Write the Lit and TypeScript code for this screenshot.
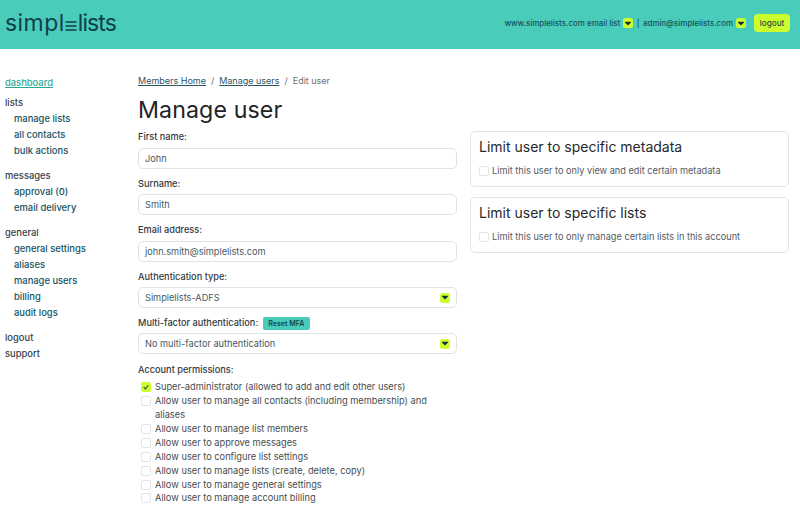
import { LitElement, html, css, svg } from "lit";
import { customElement } from "lit/decorators.js";

const caret = svg`<svg class="caret" viewBox="0 0 10 10" width="10" height="9"><path d="M1.8 3h6.4v1.2L5 7.2 1.8 4.2z" fill="#17313b"/></svg>`;

@customElement("app-root")
export class AppRoot extends LitElement {
  static styles = css`
    :host { display: block; width: 800px; height: 511px; overflow: hidden; background: #fff; font-family: Inter, "Open Sans", sans-serif; color: #3a4145; font-size: 9.5px; }
    * { box-sizing: border-box; }
    a { color: inherit; text-decoration: none; }
    header { height: 49px; background: #4accbb; display: flex; align-items: center; justify-content: space-between; padding: 0 10px 3px 5px; }
    .logo { display: flex; align-items: center; font-family: Inter, sans-serif; font-size: 23px; color: #0e3f4c; font-weight: 400; height: 36px; }
    .logo .a { letter-spacing: 0.45px; }
    .logo .b { letter-spacing: -0.9px; }
    .logo svg { margin: 0 0.5px 0 0.5px; }
    .top { display: flex; align-items: center; font-size: 7.95px; font-weight: 500; color: #145260; }
    .caretbox { width: 10px; height: 10px; background: #ccff2e; border-radius: 2.5px; display: inline-flex; align-items: center; justify-content: center; margin-left: 3px; }
    .caretbox svg { display: block; }
    .sep { margin: 0 3.5px; color: #145260; }
    .logout { background: #ccff2e; border-radius: 4px; height: 18px; width: 36px; margin-left: 8px; display: flex; align-items: center; justify-content: center; color: #2c4a3a; font-size: 8.2px; font-weight: 500; }
    .body { display: flex; }
    nav { width: 138px; padding: 26px 0 0 5px; font-size: 9.4px; line-height: 16px; font-weight: 500; color: #36404a; }
    nav .dash { color: #2aa796; text-decoration: underline; display: block; margin-bottom: 4px; }
    nav .g { margin-bottom: 9px; }
    nav .g.tight { margin-bottom: 0; line-height: 15.5px; }
    nav .sub { display: block; padding-left: 9px; color: #145260; }
    nav .s { display: block; }
    main { flex: 1; display: grid; grid-template-columns: 319px 319px; column-gap: 13px; padding-top: 25px; align-items: start; }
    .crumbs { display: flex; align-items: center; gap: 5px; font-size: 9px; line-height: 14px; color: #6a7175; }
    .crumbs a { color: #2d5563; text-decoration: underline; }
    h1 { margin: 4px 0 2px; font-size: 23.2px; line-height: 36px; font-weight: 400; color: #1f2327; letter-spacing: 0.1px; }
    label.l { display: block; font-weight: 500; font-size: 9.2px; line-height: 14px; color: #33393d; }
    .field { margin-bottom: 8.1px; }
    .field.mfa { margin-bottom: 8.8px; }
    .box { display: flex; align-items: center; justify-content: space-between; height: 21px; margin-top: 3.5px; border: 1px solid #dfe3e4; border-radius: 5px; padding: 0 6px; font-size: 9.2px; color: #3f5a63; background: #fff; }
    .box .caretbox { width: 10px; height: 10px; }
    .lbl { display: flex; align-items: center; gap: 4px; height: 14px; }
    .lbl + .box { margin-top: 3px; }
    .reset { background: #4accbb; color: #0e4a50; font-size: 7.1px; font-weight: 600; border-radius: 2px; padding: 0 5px; height: 13px; display: inline-flex; align-items: center; margin-left: 1px; }
    .perms { margin-top: 3px; padding: 0 20px 0 3px; }
    .chk { display: flex; align-items: flex-start; gap: 4px; font-size: 9.25px; line-height: 13.9px; color: #454c50; }
    .cb { flex: none; width: 10px; height: 10px; border: 1px solid #e2e5e6; border-radius: 2px; margin-top: 2px; background: #fff; display: flex; align-items: center; justify-content: center; }
    .cb.on { background: #ccff2e; border-color: #ccff2e; }
    .right { display: flex; flex-direction: column; gap: 9.5px; padding-top: 57px; }
    .card { border: 1px solid #e2e5e6; border-radius: 5px; padding: 5px 8px 10px; height: 56px; }
    .card h2 { margin: 0 0 7px; font-size: 14px; line-height: 20px; font-weight: 400; color: #26292c; }
    .card .chk { padding-left: 0; gap: 3px; color: #555b5f; font-size: 9.2px; }
  `;

  private check(text: string, on = false) {
    return html`<div class="chk"><span class="cb ${on ? "on" : ""}">${on
      ? html`<svg viewBox="0 0 10 10" width="8" height="8"><path d="M2 5.2 4.2 7.4 8 2.8" fill="none" stroke="#27503a" stroke-width="1.4"/></svg>`
      : ""}</span><span>${text}</span></div>`;
  }

  render() {
    return html`
      <header>
        <div class="logo">
          <span class="a">simpl</span>
          <svg width="12" height="21" viewBox="0 0 12 21"><path d="M0.5 9h11M0.5 13h11M0.5 17h11" stroke="#0e3f4c" stroke-width="1.5"/></svg>
          <span class="b">lists</span>
        </div>
        <div class="top">
          <span>www.simplelists.com email list</span><span class="caretbox">${caret}</span>
          <span class="sep">|</span>
          <span>admin@simplelists.com</span><span class="caretbox">${caret}</span>
          <a class="logout">logout</a>
        </div>
      </header>
      <div class="body">
        <nav>
          <a class="dash">dashboard</a>
          <div class="g"><span class="s">lists</span><a class="sub">manage lists</a><a class="sub">all contacts</a><a class="sub">bulk actions</a></div>
          <div class="g"><span class="s">messages</span><a class="sub">approval (0)</a><a class="sub">email delivery</a></div>
          <div class="g"><span class="s">general</span><a class="sub">general settings</a><a class="sub">aliases</a><a class="sub">manage users</a><a class="sub">billing</a><a class="sub">audit logs</a></div>
          <div class="g tight"><a class="s">logout</a><a class="s">support</a></div>
        </nav>
        <main>
          <section>
            <div class="crumbs"><a>Members Home</a><span>/</span><a>Manage users</a><span>/</span><span>Edit user</span></div>
            <h1>Manage user</h1>
            <div class="field"><label class="l">First name:</label><div class="box">John</div></div>
            <div class="field"><label class="l">Surname:</label><div class="box">Smith</div></div>
            <div class="field"><label class="l">Email address:</label><div class="box">john.smith@simplelists.com</div></div>
            <div class="field"><label class="l">Authentication type:</label><div class="box">Simplelists-ADFS<span class="caretbox">${caret}</span></div></div>
            <div class="field mfa"><div class="lbl"><label class="l">Multi-factor authentication:</label><span class="reset">Reset MFA</span></div><div class="box">No multi-factor authentication<span class="caretbox">${caret}</span></div></div>
            <label class="l">Account permissions:</label>
            <div class="perms">
              ${this.check("Super-administrator (allowed to add and edit other users)", true)}
              ${this.check("Allow user to manage all contacts (including membership) and aliases")}
              ${this.check("Allow user to manage list members")}
              ${this.check("Allow user to approve messages")}
              ${this.check("Allow user to configure list settings")}
              ${this.check("Allow user to manage lists (create, delete, copy)")}
              ${this.check("Allow user to manage general settings")}
              ${this.check("Allow user to manage account billing")}
            </div>
          </section>
          <aside class="right">
            <div class="card"><h2>Limit user to specific metadata</h2>${this.check("Limit this user to only view and edit certain metadata")}</div>
            <div class="card"><h2>Limit user to specific lists</h2>${this.check("Limit this user to only manage certain lists in this account")}</div>
          </aside>
        </main>
      </div>
    `;
  }
}
